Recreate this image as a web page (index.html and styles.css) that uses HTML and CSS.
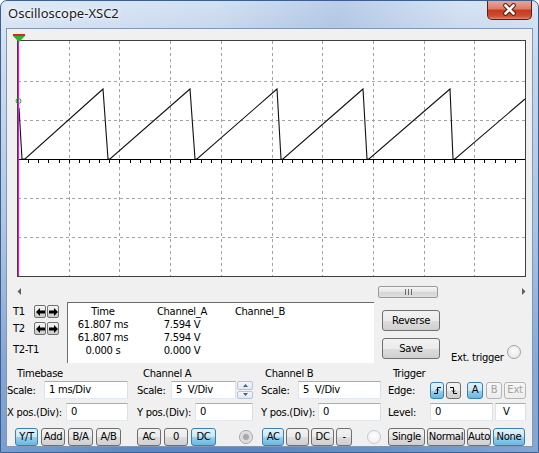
FILE: index.html
```html
<!DOCTYPE html>
<html lang="en">
  <head>
    <meta charset="UTF-8" />
    <title>Oscilloscope-XSC2</title>
    <link rel="stylesheet" href="styles.css">
  </head>
  <body>
    <div class="window">
      <div class="titlebar">
        <span class="title">Oscilloscope-XSC2</span>
        <button class="close" type="button">
          <svg width="43" height="18" viewBox="0 0 43 18">
            <path d="M17.5 4.5l8 8M25.5 4.5l-8 8" stroke="#5a1a0e" stroke-width="4.6" stroke-linecap="round" />
            <path d="M17.5 4.5l8 8M25.5 4.5l-8 8" stroke="#fff" stroke-width="2.6" stroke-linecap="round" />
          </svg>
        </button>
      </div>

      <div class="client">
        <div class="screen">
          <svg class="plot" width="507" height="235" viewBox="0 0 507 235">
            <g stroke="#a3a3a3" stroke-dasharray="3 3" fill="none">
              <path d="M51.5 0v235M101.5 0v235M152.5 0v235M203.5 0v235M254.5 0v235M304.5 0v235M355.5 0v235M406.5 0v235M456.5 0v235" />
              <path d="M0 40.5h507M0 79.5h507M0 157.5h507M0 196.5h507" />
            </g>
            <path d="M0 118.5h507" stroke="#000" />
            <path stroke="#000" d="M10.5 118v4M20.5 118v4M30.5 118v4M41.5 118v4M51.5 118v4M61.5 118v4M71.5 118v4M81.5 118v4M91.5 118v4M101.5 118v4M112.5 118v4M122.5 118v4M132.5 118v4M142.5 118v4M152.5 118v4M162.5 118v4M172.5 118v4M183.5 118v4M193.5 118v4M203.5 118v4M213.5 118v4M223.5 118v4M233.5 118v4M243.5 118v4M254.5 118v4M264.5 118v4M274.5 118v4M284.5 118v4M294.5 118v4M304.5 118v4M314.5 118v4M324.5 118v4M335.5 118v4M345.5 118v4M355.5 118v4M365.5 118v4M375.5 118v4M385.5 118v4M395.5 118v4M406.5 118v4M416.5 118v4M426.5 118v4M436.5 118v4M446.5 118v4M456.5 118v4M466.5 118v4M477.5 118v4M487.5 118v4M497.5 118v4" />
            <polyline fill="none" stroke="#111" stroke-width="1.1"
              points="1,67 4,118 7,118 85,48 90,118 92,118 172,48 177,118 179,118 259,48 263,118 265,118 345,48 349,118 351,118 432,48 435,118 437,118 507,58" />
            <path d="M0.5 0v235" stroke="#ff00ff" />
            <circle cx="0.5" cy="60" r="2.5" fill="none" stroke="#2aa52a" />
            <rect x="-5" y="-7" width="12" height="2" fill="#e2231a" />
            <path d="M-5 -5h12l-6 6z" fill="#31b531" />
          </svg>
        </div>

        <div class="hscroll">
          <span class="sb-arrow">
            <svg width="4" height="7" viewBox="0 0 4 7"><path d="M4 0v7L0.5 3.5z" fill="#5f5f5f" /></svg>
          </span>
          <div class="sb-track">
            <div class="sb-thumb">
              <svg width="7" height="6" viewBox="0 0 7 6">
                <path d="M0.5 0v6M3.5 0v6M6.5 0v6" stroke="#6c6c6c" />
              </svg>
            </div>
          </div>
          <span class="sb-arrow">
            <svg width="4" height="7" viewBox="0 0 4 7"><path d="M0 0v7l3.5-3.5z" fill="#5f5f5f" /></svg>
          </span>
        </div>

        <div class="readout">
          <div class="cursors">
            <div class="cur-row">
              <span class="cur-label">T1</span>
              <button class="arr" type="button">
                <svg width="9" height="8" viewBox="0 0 9 8"><path d="M0 4l4-4v2.5h5v3H4V8z" fill="#000" /></svg>
              </button>
              <button class="arr" type="button">
                <svg width="9" height="8" viewBox="0 0 9 8"><path d="M9 4L5 0v2.5H0v3h5V8z" fill="#000" /></svg>
              </button>
            </div>
            <div class="cur-row">
              <span class="cur-label">T2</span>
              <button class="arr" type="button">
                <svg width="9" height="8" viewBox="0 0 9 8"><path d="M0 4l4-4v2.5h5v3H4V8z" fill="#000" /></svg>
              </button>
              <button class="arr" type="button">
                <svg width="9" height="8" viewBox="0 0 9 8"><path d="M9 4L5 0v2.5H0v3h5V8z" fill="#000" /></svg>
              </button>
            </div>
            <div class="cur-diff">T2-T1</div>
          </div>

          <div class="values">
            <span>Time</span><span>Channel_A</span><span>Channel_B</span>
            <span>61.807 ms</span><span>7.594 V</span><span></span>
            <span>61.807 ms</span><span>7.594 V</span><span></span>
            <span>0.000 s</span><span>0.000 V</span><span></span>
          </div>

          <div class="actions">
            <button class="btn btn-big reverse" type="button">Reverse</button>
            <div class="save-row">
              <button class="btn btn-big" type="button">Save</button>
              <span class="ext">Ext. trigger</span>
              <span class="radio"></span>
            </div>
          </div>
        </div>

        <div class="controls">
          <div class="group g-time">
            <div class="g-title">Timebase</div>
            <div class="g-row">
              <span>Scale:</span>
              <span class="field w84">1 ms/Div</span>
            </div>
            <div class="g-row">
              <span>X pos.(Div):</span>
              <span class="field w62">0</span>
            </div>
            <div class="g-btns">
              <button class="btn on w23" type="button">Y/T</button>
              <button class="btn w24" type="button">Add</button>
              <button class="btn w25" type="button">B/A</button>
              <button class="btn w25" type="button">A/B</button>
            </div>
          </div>

          <div class="group g-cha">
            <div class="g-title">Channel A</div>
            <div class="g-row">
              <span>Scale:</span>
              <span class="spin-field">
                <span class="field w65">5&nbsp; V/Div</span>
                <span class="spinner">
                  <span class="spin-half"><svg width="5" height="3" viewBox="0 0 5 3"><path d="M0 3L2.5 0 5 3z" fill="#4c607e" /></svg></span>
                  <span class="spin-half"><svg width="5" height="3" viewBox="0 0 5 3"><path d="M0 0l2.5 3L5 0z" fill="#4c607e" /></svg></span>
                </span>
              </span>
            </div>
            <div class="g-row">
              <span>Y pos.(Div):</span>
              <span class="field w58">0</span>
            </div>
            <div class="g-btns">
              <button class="btn w24" type="button">AC</button>
              <button class="btn w24" type="button">0</button>
              <button class="btn on w25" type="button">DC</button>
              <span class="radio dot radio-a"></span>
            </div>
          </div>

          <div class="group g-chb">
            <div class="g-title">Channel B</div>
            <div class="g-row">
              <span>Scale:</span>
              <span class="field w83">5&nbsp; V/Div</span>
            </div>
            <div class="g-row">
              <span>Y pos.(Div):</span>
              <span class="field w63">0</span>
            </div>
            <div class="g-btns tight">
              <button class="btn on w23" type="button">AC</button>
              <button class="btn w23" type="button">0</button>
              <button class="btn w24" type="button">DC</button>
              <button class="btn w16" type="button">-</button>
              <span class="radio light radio-b"></span>
            </div>
          </div>

          <div class="group g-trig">
            <div class="g-title">Trigger</div>
            <div class="g-row start">
              <span class="t-label">Edge:</span>
              <button class="btn on small w14" type="button">
                <svg width="9" height="9" viewBox="0 0 9 9"><path d="M1 7.5h3.5v-6H8M3 4.5l1.5-1.5L6 4.5" fill="none" stroke="#000" /></svg>
              </button>
              <button class="btn small w15 ml2" type="button">
                <svg width="9" height="9" viewBox="0 0 9 9"><path d="M1 1.5h3.5v6H8M3 4.5l1.5 1.5L6 4.5" fill="none" stroke="#000" /></svg>
              </button>
              <button class="btn on small w16 ml6" type="button">A</button>
              <button class="btn off small w16 ml3" type="button">B</button>
              <button class="btn off small w22 ml2" type="button">Ext</button>
            </div>
            <div class="g-row start">
              <span class="t-label">Level:</span>
              <span class="field w63">0</span>
              <span class="field w31 unit">V</span>
            </div>
            <div class="g-btns snug">
              <button class="btn w37" type="button">Single</button>
              <button class="btn w38" type="button">Normal</button>
              <button class="btn w24" type="button">Auto</button>
              <button class="btn on w32" type="button">None</button>
            </div>
          </div>
        </div>
      </div>
    </div>
  </body>
</html>
```

FILE: styles.css
```css
* {
  box-sizing: border-box;
}

body {
  margin: 0;
  font-family: "DejaVu Sans", Tahoma, sans-serif;
  font-size: 10px;
  letter-spacing: -0.3px;
  color: #000;
  background: #fff;
}

button {
  font: inherit;
  letter-spacing: inherit;
  color: inherit;
}

/* window frame */

.window {
  width: 539px;
  height: 453px;
  padding: 0 6px 6px;
  border: 1px solid #3d5f8f;
  border-radius: 7px 7px 0 0;
  background:
    linear-gradient(100deg, rgba(255, 255, 255, 0.3) 0%, rgba(255, 255, 255, 0) 35%, rgba(90, 130, 190, 0.2) 55%, rgba(255, 255, 255, 0.08) 75%, rgba(255, 255, 255, 0.25) 100%),
    linear-gradient(#d3e1f2 0%, #bcd0ea 12%, #94b4dc 50%, #6690ca 80%, #5a88c6 100%);
  display: flex;
  flex-direction: column;
}

.titlebar {
  height: 28px;
  display: flex;
  justify-content: space-between;
  align-items: flex-start;
}

.title {
  padding-left: 1px;
  font-family: "Noto Sans", "Open Sans", sans-serif;
  font-size: 13px;
  letter-spacing: 0;
  line-height: 24px;
  color: #1a1a1a;
  text-shadow: 0 0 6px #fff, 0 0 3px #fff;
}

.close {
  width: 45px;
  height: 19px;
  padding: 0;
  border: 1px solid #5c1f14;
  border-top: 0;
  border-radius: 0 0 5px 5px;
  background: linear-gradient(#eaa595 0%, #dc7b65 45%, #c6391c 50%, #cf4f35 85%, #e2896a 100%);
  display: flex;
  align-items: center;
  justify-content: center;
}

.client {
  flex: 1;
  background: #f0f0f0;
  box-shadow: 0 0 0 1px #8297b3;
  display: flex;
  flex-direction: column;
}

/* scope screen */

.screen {
  margin: 11px 6px 0 10px;
  height: 237px;
  border: 1px solid #3f3f3f;
  background: #fff;
}

.plot {
  display: block;
  overflow: visible;
}

.hscroll {
  margin: 6px 0 0 3px;
  height: 17px;
  display: flex;
}

.sb-arrow {
  width: 17px;
  display: flex;
  align-items: center;
  justify-content: center;
}

.sb-track {
  flex: 1;
}

.sb-thumb {
  margin: 3px 0 0 351px;
  width: 60px;
  height: 12px;
  border: 1px solid #9a9a9a;
  border-radius: 2px;
  background: linear-gradient(#f6f6f6, #e4e4e4 50%, #d6d6d6 51%, #dedede);
  display: flex;
  align-items: center;
  justify-content: center;
}

/* cursor readout */

.readout {
  margin-top: 2px;
  height: 61px;
  display: flex;
}

.cursors {
  width: 60px;
  padding: 3px 0 0 6px;
}

.cur-row {
  height: 13px;
  display: flex;
  align-items: center;
}

.cur-row + .cur-row {
  margin-top: 4px;
}

.cur-label {
  width: 21px;
}

.arr {
  width: 12px;
  height: 13px;
  padding: 0;
  border: 1px solid #707070;
  border-radius: 2px;
  background: linear-gradient(#f4f4f4, #e6e6e6 50%, #d8d8d8 51%, #cdcdcd);
  display: flex;
  align-items: center;
  justify-content: center;
}

.arr + .arr {
  margin-left: 1px;
}

.cur-diff {
  margin-top: 8px;
  line-height: 13px;
}

.values {
  width: 307px;
  padding-top: 2px;
  border-top: 1px solid #6d6d6d;
  border-left: 1px solid #6d6d6d;
  background: #fff;
  display: grid;
  grid-template-columns: 70px 88px 68px;
  grid-auto-rows: 13px;
  align-content: start;
  line-height: 13px;
  text-align: center;
}

.actions {
  margin-left: 8px;
  display: flex;
  flex-direction: column;
}

.reverse {
  margin-top: 8px;
}

.save-row {
  margin-top: 7px;
  display: flex;
  align-items: flex-end;
}

.ext {
  margin: 0 3px -4px 11px;
  white-space: nowrap;
}

/* buttons and fields */

.btn {
  height: 18px;
  padding: 0;
  border: 1px solid #707070;
  border-radius: 3px;
  background: linear-gradient(#f2f2f2 0%, #ebebeb 50%, #dddddd 51%, #cfcfcf 100%);
  line-height: 16px;
  text-align: center;
  white-space: nowrap;
  display: flex;
  align-items: center;
  justify-content: center;
}

.btn.on {
  border-color: #3c7fb1;
  background: linear-gradient(#e5f4fc 0%, #c4e5f6 50%, #98d1ef 51%, #6cb6de 100%);
}

.btn.off {
  color: #a3a3a3;
  border-color: #b5b5b5;
  background: linear-gradient(#f7f7f7, #ededed);
}

.btn.small {
  height: 17px;
}

.btn-big {
  width: 58px;
  height: 21px;
}

.field {
  height: 18px;
  padding-left: 4px;
  border: 1px solid;
  border-color: #abadb3 #dbdfe6 #e3e9ef #e2e3ea;
  background: #fff;
  line-height: 16px;
  white-space: nowrap;
}

.field.unit {
  margin-left: 2px;
  padding-left: 7px;
}

.radio {
  width: 14px;
  height: 14px;
  flex: none;
  border: 1px solid #a2a2a2;
  border-radius: 50%;
  background: radial-gradient(circle at 50% 40%, #fdfdfd, #e0e0e0);
}

.radio.dot {
  background: radial-gradient(circle, #a8a8a8 0 2.5px, #d8d8d8 3.5px, #f4f4f4 100%);
}

.radio.light {
  border-color: #c9c9c9;
  background: radial-gradient(circle at 50% 40%, #ffffff, #ececec);
}

.w14 { width: 14px; }
.w15 { width: 15px; }
.w16 { width: 16px; }
.w22 { width: 22px; }
.w23 { width: 23px; }
.w24 { width: 24px; }
.w25 { width: 25px; }
.w31 { width: 31px; }
.w32 { width: 32px; }
.w37 { width: 37px; }
.w38 { width: 38px; }
.w58 { width: 58px; }
.w62 { width: 62px; }
.w63 { width: 63px; }
.w65 { width: 65px; }
.w83 { width: 83px; }
.w84 { width: 84px; }

.ml2 { margin-left: 2px; }
.ml3 { margin-left: 3px; }
.ml6 { margin-left: 6px; }

/* control groups */

.controls {
  margin-top: 3px;
  flex: 1;
  display: flex;
}

.group {
  display: flex;
  flex-direction: column;
}

.g-time {
  width: 125px;
  padding-right: 4px;
}

.g-cha {
  width: 126px;
  padding: 0 5px;
}

.g-chb {
  width: 127px;
  padding: 0 4px 0 3px;
}

.g-trig {
  width: 147px;
  padding: 0 6px 0 3px;
}

.g-title {
  height: 15px;
  line-height: 15px;
}

.g-time .g-title { padding-left: 10px; }
.g-cha .g-title { padding-left: 6px; }
.g-chb .g-title { padding-left: 4px; }
.g-trig .g-title { padding-left: 5px; }

.g-row {
  height: 18px;
  white-space: nowrap;
  display: flex;
  align-items: center;
  justify-content: space-between;
}

.g-row.start {
  justify-content: flex-start;
}

.g-row + .g-row {
  margin-top: 4px;
}

.t-label {
  width: 42px;
}

.spin-field {
  display: flex;
  gap: 1px;
}

.spinner {
  width: 16px;
  height: 18px;
  display: flex;
  flex-direction: column;
  gap: 1px;
}

.spin-half {
  flex: 1;
  border: 1px solid #b8c4d4;
  border-radius: 2px;
  background: linear-gradient(#f3f7fb, #dfe8f2);
  display: flex;
  align-items: center;
  justify-content: center;
}

.g-btns {
  margin-top: 7px;
  height: 18px;
  display: flex;
  align-items: center;
  gap: 3px;
}

.g-time .g-btns {
  padding-left: 8px;
}

.g-btns.tight {
  gap: 2px;
  padding-left: 1px;
}

.g-btns.snug {
  gap: 2px;
}

.radio-a {
  margin-left: 20px;
}

.radio-b {
  margin-left: 13px;
}
```
